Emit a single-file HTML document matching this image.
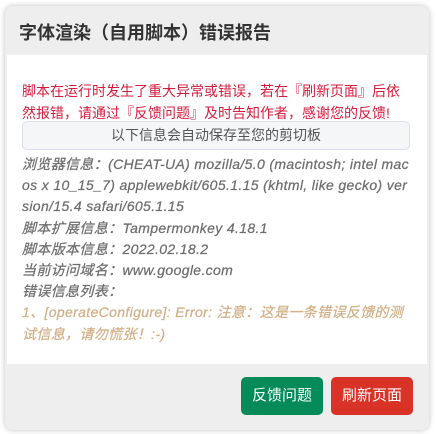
<!DOCTYPE html>
<html><head><meta charset="utf-8"><style>
html,body{margin:0;padding:0;width:436px;height:434px;background:#fff;overflow:hidden;font-family:"Liberation Sans","Noto Sans CJK SC",sans-serif;}
.card{position:absolute;left:5px;top:6px;width:424px;height:424px;background:#eee;border-radius:8px;box-shadow:0 0 6px rgba(0,0,0,.25);overflow:hidden;}
.hd{position:absolute;left:14px;top:13px;font-size:18px;font-weight:bold;color:#333;}
.bd{position:absolute;left:2px;top:49px;width:420px;height:309px;background:#fff;}
.warn{position:absolute;left:15px;top:25px;width:390px;font-size:14px;line-height:22px;color:#d41c3c;}
.box{position:absolute;left:15px;top:66px;width:386px;height:27px;background:#f5f6f8;border:1px solid #dde;border-radius:5px;text-align:center;font-size:14px;line-height:27px;color:#555;}
.info{position:absolute;left:15px;top:99px;width:390px;font-size:14px;line-height:21.2px;color:#6e6e6e;font-style:italic;word-break:break-all;letter-spacing:0.35px;-webkit-text-stroke:0.25px #6e6e6e;}
.err{color:#d2b088;-webkit-text-stroke:0.25px #d2b088;}
.btn{position:absolute;top:371px;width:82px;height:38px;border-radius:5px;color:#fff;font-size:15px;line-height:38px;text-align:center;}
</style></head><body>
<div class="card">
<div class="hd">字体渲染（自用脚本）错误报告</div>
<div class="bd">
<div class="warn">脚本在运行时发生了重大异常或错误，若在『刷新页面』后依然报错，请通过『反馈问题』及时告知作者，感谢您的反馈!</div>
<div class="box">以下信息会自动保存至您的剪切板</div>
<div class="info">浏览器信息：(CHEAT-UA) mozilla/5.0 (macintosh; intel mac os x 10_15_7) applewebkit/605.1.15 (khtml, like gecko) version/15.4 safari/605.1.15<br>脚本扩展信息：Tampermonkey 4.18.1<br>脚本版本信息：2022.02.18.2<br>当前访问域名：www.google.com<br>错误信息列表：<br><span class="err">1、[operateConfigure]: Error: 注意：这是一条错误反馈的测试信息，请勿慌张！:-)</span></div>
</div>
<div class="btn" style="left:236px;background:#058a5a">反馈问题</div>
<div class="btn" style="left:326px;background:#d93226">刷新页面</div>
</div>
</body></html>
